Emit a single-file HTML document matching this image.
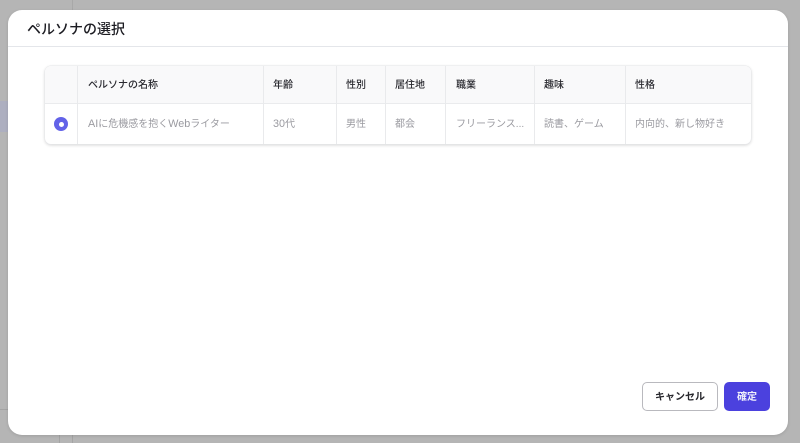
<!DOCTYPE html>
<html lang="ja">
<head>
<meta charset="utf-8">
<style>
html,body{margin:0;padding:0;width:800px;height:443px;overflow:hidden;background:#b5b5b5;font-family:"Liberation Sans","Noto Sans CJK JP",sans-serif}
.a{position:absolute}
#blur{position:absolute;left:0;top:0;width:800px;height:443px;filter:blur(.35px)}
.modal{left:8px;top:10px;width:780px;height:425px;background:#fff;border-radius:14px;box-shadow:0 1px 3px rgba(0,0,0,.12)}
.title{left:27px;top:19px;font-size:14px;line-height:20px;color:#1c1c22;font-weight:500;white-space:nowrap}
.hr{left:8px;top:46px;width:780px;height:1px;background:#e4e6ea}
.table{left:45px;top:66px;width:706px;height:78px;border-radius:6px;background:#fff;box-shadow:0 0 0 .5px #e6e7ea,0 1px 3px rgba(0,0,0,.2);overflow:hidden}
.head{left:0;top:0;width:706px;height:37px;background:#f9f9fa;border-bottom:1px solid #eaebed}
.v{top:0;width:1px;height:78px;background:#e9eaec}
.th,.td{position:absolute;font-size:10px;line-height:14px;white-space:nowrap}
.th{top:13px;color:#2a2a30;font-weight:500}
.td{top:52px;color:#9a9aa0}
.td.l{top:51px}
.td b{font-weight:400;font-size:10.8px}
.radio{left:9px;top:51px;width:14px;height:14px;border-radius:50%;background:#6262e8}
.radio i{position:absolute;left:4.5px;top:4.5px;width:5px;height:5px;border-radius:50%;background:#fff}
.btn{position:absolute;border-radius:5px;box-sizing:border-box;font-size:10px;font-weight:700;text-align:center;top:382px;height:29px}
.cancel{left:642px;width:76px;background:#fff;border:1px solid #b9b9be;color:#26262c;line-height:29px}
.ok{left:724px;width:46px;background:#4b41de;color:#f0f0fb;line-height:31px}
</style>
</head>
<body>
<div id="blur">
<div class="a" style="left:72px;top:0;width:1px;height:10px;background:#a8a8a8"></div>
<div class="a" style="left:59px;top:435px;width:1px;height:8px;background:#a4a4a4"></div>
<div class="a" style="left:72px;top:435px;width:1px;height:8px;background:#a4a4a4"></div>
<div class="a" style="left:0;top:101px;width:8px;height:31px;background:#adafc0"></div>
<div class="a" style="left:0;top:409px;width:8px;height:1px;background:#a4a4a4"></div>
<div class="a modal"></div>
<div class="a title">ペルソナの選択</div>
<div class="a hr"></div>
<div class="a table">
<div class="a head"></div>
<div class="a v" style="left:32px"></div>
<div class="a v" style="left:218px"></div>
<div class="a v" style="left:291px"></div>
<div class="a v" style="left:340px"></div>
<div class="a v" style="left:400px"></div>
<div class="a v" style="left:489px"></div>
<div class="a v" style="left:580px"></div>
<div class="th" style="left:43px">ペルソナの名称</div>
<div class="th" style="left:228px">年齢</div>
<div class="th" style="left:301px">性別</div>
<div class="th" style="left:350px">居住地</div>
<div class="th" style="left:411px">職業</div>
<div class="th" style="left:499px">趣味</div>
<div class="th" style="left:590px">性格</div>
<div class="a radio"><i></i></div>
<div class="td l" style="left:43px"><b>AI</b>に危機感を抱く<b>Web</b>ライター</div>
<div class="td l" style="left:228px"><b>30</b>代</div>
<div class="td" style="left:301px">男性</div>
<div class="td" style="left:350px">都会</div>
<div class="td" style="left:411px">フリーランス...</div>
<div class="td" style="left:499px">読書、ゲーム</div>
<div class="td" style="left:590px">内向的、新し物好き</div>
</div>
<div class="btn cancel">キャンセル</div>
<div class="btn ok">確定</div>
</div>
</body>
</html>
